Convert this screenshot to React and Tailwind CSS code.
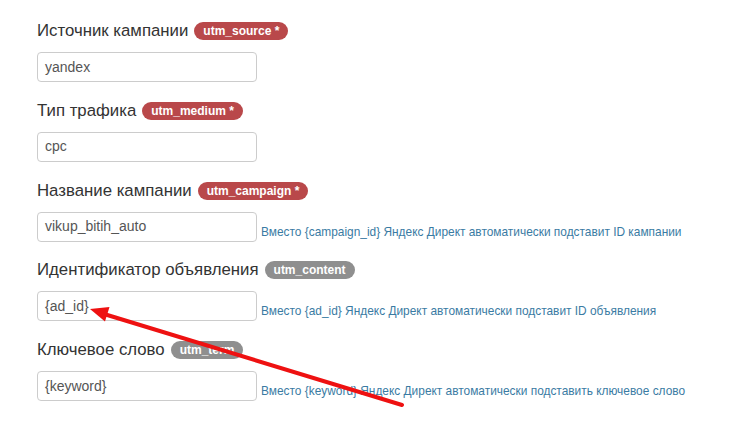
import React from 'react';

const fields = [
  { label: 'Источник кампании', tag: 'utm_source *', required: true, value: 'yandex' },
  { label: 'Тип трафика', tag: 'utm_medium *', required: true, value: 'cpc' },
  {
    label: 'Название кампании',
    tag: 'utm_campaign *',
    required: true,
    value: 'vikup_bitih_auto',
    help: 'Вместо {campaign_id} Яндекс Директ автоматически подставит ID кампании',
  },
  {
    label: 'Идентификатор объявления',
    tag: 'utm_content',
    value: '{ad_id}',
    help: 'Вместо {ad_id} Яндекс Директ автоматически подставит ID объявления',
  },
  {
    label: 'Ключевое слово',
    tag: 'utm_term',
    value: '{keyword}',
    help: 'Вместо {keyword} Яндекс Директ автоматически подставить ключевое слово',
  },
];

const Field = ({ label, tag, required, value, help }) => (
  <div className="mb-[18.75px]">
    <div className="flex items-center h-5">
      <span className="text-[16.8px] leading-5 text-[#333]">{label}</span>
      <span
        className={`ml-[6px] h-[18px] px-[9px] rounded-full text-white text-[12px] font-bold leading-[18px] ${
          required ? 'bg-[#b9484a]' : 'bg-[#8f8f8f]'
        }`}
      >
        {tag}
      </span>
    </div>
    <div className="flex items-end mt-[11px]">
      <div className="w-[220px] h-[30px] border border-[#ccc] rounded-[4px] bg-white px-[7px] flex items-center text-[14px] text-[#555]">
        {value}
      </div>
      {help && (
        <span className="ml-[4px] mb-[2px] text-[11.9px] leading-4 text-[#3a7ba3]">{help}</span>
      )}
    </div>
  </div>
);

export default function App() {
  return (
    <div
      className="relative w-[739px] h-[431px] bg-white overflow-hidden pl-[37px] pt-[21px]"
      style={{ fontFamily: '"Liberation Sans", Arial, sans-serif' }}
    >
      {fields.map((f) => (
        <Field key={f.tag} {...f} />
      ))}
      <svg className="absolute inset-0 pointer-events-none" width="739" height="431">
        <line x1="402" y1="405" x2="104" y2="314" stroke="#ee1111" strokeWidth="4" strokeLinecap="round" />
        <polygon points="90,309 105,321.5 109.5,307" fill="#ee1111" />
      </svg>
    </div>
  );
}
